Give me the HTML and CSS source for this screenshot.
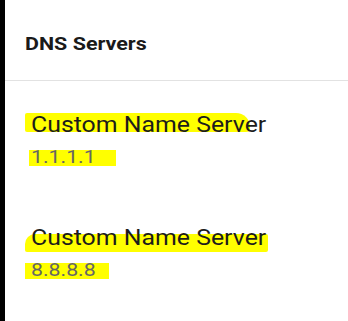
FILE: index.html
```html
<html>
  <head>
    <title>DNS Servers</title>
    <link rel="stylesheet" href="styles.css">
  </head>
  <body>
    <div class="screen">
      <div class="edge"></div>
      <div class="panel">
        <div class="header"><span class="stretch">DNS Servers</span></div>
        <div class="list">
          <div class="item">
            <div class="title">
              <span class="mark mark-title1"></span>
              <span class="stretch">Custom Name Server</span>
            </div>
            <div class="sub">
              <span class="mark mark-sub1"></span>
              <span class="stretch">1.1.1.1</span>
            </div>
          </div>
          <div class="item">
            <div class="title">
              <span class="mark mark-title2"></span>
              <span class="stretch">Custom Name Server</span>
            </div>
            <div class="sub">
              <span class="mark mark-sub2"></span>
              <span class="stretch">8.8.8.8</span>
            </div>
          </div>
        </div>
      </div>
    </div>
  </body>
</html>
```

FILE: styles.css
```css
body {
  margin: 0;
  background: #ffffff;
  font-family: Roboto, "Liberation Sans", sans-serif;
}
.screen {
  display: flex;
  height: 321px;
}
.edge {
  width: 5px;
  background: #000000;
}
.panel {
  flex: 1;
}
.header {
  height: 81px;
  box-sizing: border-box;
  padding: 32px 0 0 20px;
  font-size: 19px;
  line-height: 23px;
  font-weight: 700;
  color: #1a1a1a;
  border-bottom: 1px solid #e2e2e2;
}
.stretch {
  display: inline-block;
  position: relative;
  transform: scaleX(1.13);
  transform-origin: left center;
  white-space: nowrap;
}
.item {
  padding: 31px 0 26px 26px;
}
.title {
  position: relative;
  font-size: 22px;
  line-height: 26px;
  color: #1c1c1c;
}
.title .stretch {
  transform: scaleX(1.13);
}
.sub {
  position: relative;
  margin-top: 8px;
  font-size: 19px;
  line-height: 22px;
  color: #666666;
}
.sub .stretch {
  transform: scaleX(1.12);
}
.mark {
  position: absolute;
  background: #ffff00;
}
.mark-title1 {
  left: -6px;
  top: 1px;
  width: 225px;
  height: 19px;
  border-radius: 2px 14px 4px 2px;
}
.mark-sub1 {
  left: -2px;
  top: 4px;
  width: 87px;
  height: 16px;
}
.mark-title2 {
  left: -6px;
  top: 9px;
  width: 243px;
  height: 18px;
  border-radius: 10px 2px 2px 2px;
}
.mark-sub2 {
  left: -6px;
  top: 4px;
  width: 84px;
  height: 16px;
}
```
